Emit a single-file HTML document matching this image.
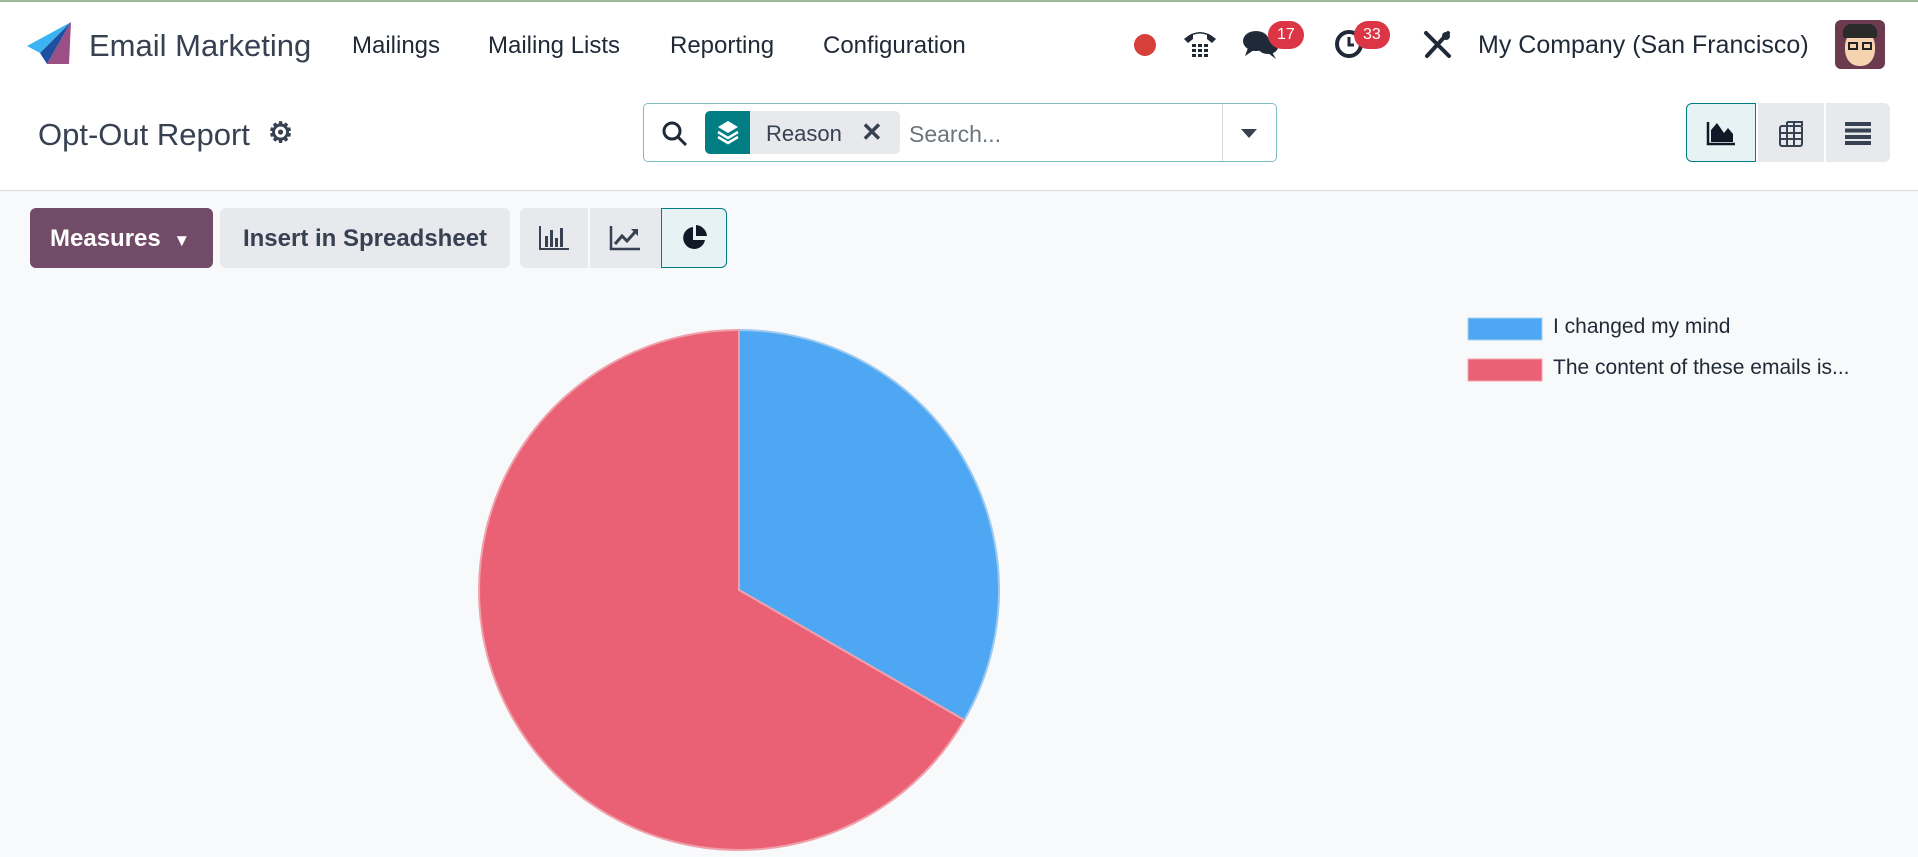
<!DOCTYPE html>
<html><head><meta charset="utf-8"><style>
*{margin:0;padding:0;box-sizing:border-box}
body{width:1918px;height:857px;overflow:hidden;background:#f8f9fa;font-family:"Liberation Sans",sans-serif;color:#212529;position:relative}
.a{position:absolute}
.top{left:0;top:0;width:1918px;height:191px;background:#fff;border-top:2px solid #9fb99c;border-bottom:1px solid #d8dadd}
.nav{font-size:24px;color:#1f2937;top:32px}
.badge{background:#dc3545;color:#fff;font-size:16px;border-radius:14px;height:28px;line-height:28px;padding:0 9px;top:21px}
.btn{background:#e7e9ed;border-radius:6px;top:208px;height:60px}
</style></head><body>
<div class="a top"></div>
<svg class="a" style="left:27px;top:22px" width="44" height="44" viewBox="0 0 44 44">
<polygon points="44,0 0,24 13,31" fill="#3ab4f2"/>
<polygon points="44,0 13,31 20,42" fill="#1e4fa0"/>
<polygon points="44,0 20,42 42,42" fill="#9c4f86"/>
</svg>
<div class="a" style="left:89px;top:28px;font-size:31px;color:#374151">Email Marketing</div>
<div class="a nav" style="left:352px">Mailings</div>
<div class="a nav" style="left:488px">Mailing Lists</div>
<div class="a nav" style="left:670px">Reporting</div>
<div class="a nav" style="left:823px">Configuration</div>
<div class="a" style="left:1134px;top:34px;width:22px;height:22px;border-radius:50%;background:#d63f3a"></div>
<svg class="a" style="left:1182px;top:27px" width="36" height="32" viewBox="0 0 36 32"><path d="M2 12 Q18 -2 34 12 L30 16 L25 12 L25 8 Q18 5 11 8 L11 12 L6 16Z" fill="#1f2937"/><g fill="#1f2937"><rect x="10" y="17" width="4" height="3"/><rect x="16" y="17" width="4" height="3"/><rect x="22" y="17" width="4" height="3"/><rect x="10" y="22" width="4" height="3"/><rect x="16" y="22" width="4" height="3"/><rect x="22" y="22" width="4" height="3"/><rect x="10" y="27" width="4" height="3"/><rect x="16" y="27" width="4" height="3"/><rect x="22" y="27" width="4" height="3"/></g></svg>
<svg class="a" style="left:1242px;top:28px" width="40" height="32" viewBox="0 0 40 32"><ellipse cx="14" cy="13" rx="13" ry="10" fill="#1f2937"/><path d="M6 20 L3 28 L12 22Z" fill="#1f2937"/><ellipse cx="26" cy="19" rx="10" ry="7" fill="#1f2937"/><path d="M30 24 L34 31 L26 25Z" fill="#1f2937"/></svg>
<div class="a badge" style="left:1268px">17</div>
<svg class="a" style="left:1333px;top:28px" width="32" height="32" viewBox="0 0 32 32"><circle cx="16" cy="16" r="12" fill="none" stroke="#1f2937" stroke-width="4"/><path d="M16 9 V17 H21" stroke="#1f2937" stroke-width="3" fill="none"/></svg>
<div class="a badge" style="left:1354px">33</div>
<svg class="a" style="left:1422px;top:30px" width="30" height="30" viewBox="0 0 30 30"><path d="M4 3 L27 26 M26 3 L5 26" stroke="#1f2937" stroke-width="4" stroke-linecap="round"/><circle cx="24" cy="6" r="4" fill="#1f2937"/></svg>
<div class="a nav" style="left:1478px;top:31px;font-size:25px">My Company (San Francisco)</div>
<div class="a" style="left:1835px;top:20px;width:50px;height:49px;border-radius:6px;background:#6b3a4e;overflow:hidden">
<div class="a" style="left:10px;top:10px;width:30px;height:36px;border-radius:45%;background:#f5d2b0"></div>
<div class="a" style="left:8px;top:4px;width:34px;height:14px;border-radius:8px 8px 2px 2px;background:#2a2a2a"></div>
<div class="a" style="left:13px;top:22px;width:10px;height:8px;border:2px solid #222"></div>
<div class="a" style="left:27px;top:22px;width:10px;height:8px;border:2px solid #222"></div>
</div>
<div class="a" style="left:38px;top:117px;font-size:31px;color:#374151">Opt-Out Report</div>
<div class="a" style="left:268px;top:116px;font-size:28px;color:#374151;font-weight:bold">⚙</div>
<div class="a" style="left:643px;top:103px;width:634px;height:59px;border:1px solid #7fbcbf;border-radius:5px;background:#fff"></div>
<svg class="a" style="left:661px;top:120px" width="28" height="28" viewBox="0 0 28 28"><circle cx="11" cy="11" r="8" fill="none" stroke="#1f2937" stroke-width="3"/><path d="M17 17 L25 25" stroke="#1f2937" stroke-width="3"/></svg>
<div class="a" style="left:705px;top:111px;width:195px;height:43px;background:#e7e9ed;border-radius:5px"></div>
<div class="a" style="left:705px;top:111px;width:45px;height:43px;background:#017e84;border-radius:5px 0 0 5px"></div>
<svg class="a" style="left:716px;top:119px" width="24" height="28" viewBox="0 0 24 28"><path d="M12 2 L22 8 L12 14 L2 8Z" fill="#fff"/><path d="M2 13 L12 19 L22 13 M2 18 L12 24 L22 18" stroke="#fff" stroke-width="2.5" fill="none"/></svg>
<div class="a" style="left:766px;top:121px;font-size:22px;color:#374151">Reason</div>
<div class="a" style="left:861px;top:117px;font-size:26px;color:#374151;font-weight:bold">✕</div>
<div class="a" style="left:909px;top:121px;font-size:23px;color:#6c757d">Search...</div>
<div class="a" style="left:1222px;top:104px;width:1px;height:57px;background:#d8dadd"></div>
<div class="a" style="left:1241px;top:129px;width:0;height:0;border-left:8px solid transparent;border-right:8px solid transparent;border-top:9px solid #374151"></div>
<div class="a" style="left:1686px;top:103px;width:70px;height:59px;background:#e6f2f3;border:1px solid #017e84;border-radius:6px 0 0 6px"></div>
<svg class="a" style="left:1706px;top:120px" width="30" height="26" viewBox="0 0 30 26"><path d="M2 2 V24 H29" stroke="#111827" stroke-width="2.5" fill="none"/><path d="M5 22 V10 L11 3 L18 13 L22 8 L27 14 V22Z" fill="#111827"/></svg>
<div class="a" style="left:1758px;top:103px;width:66px;height:59px;background:#e7e9ed"></div>
<svg class="a" style="left:1777px;top:120px" width="28" height="28" viewBox="0 0 28 28"><g stroke="#374151" stroke-width="2" fill="none"><rect x="3" y="6" width="22" height="20" rx="2"/><path d="M10 2 V26 M17 2 V26 M3 13 H25 M3 19 H25 M10 2 H25 V6"/></g></svg>
<div class="a" style="left:1826px;top:103px;width:64px;height:59px;background:#e7e9ed;border-radius:0 6px 6px 0"></div>
<svg class="a" style="left:1844px;top:121px" width="28" height="24" viewBox="0 0 28 24"><g fill="#374151"><rect x="1" y="1" width="26" height="4"/><rect x="1" y="7.5" width="26" height="4"/><rect x="1" y="14" width="26" height="4"/><rect x="1" y="20" width="26" height="4"/></g></svg>
<div class="a btn" style="left:30px;width:183px;background:#714b67;color:#fff;font-size:24px;font-weight:bold;line-height:62px;padding-left:20px">Measures <span style="font-size:17px;margin-left:6px">▼</span></div>
<div class="a btn" style="left:220px;width:290px;font-size:24px;font-weight:bold;color:#374151;line-height:62px;text-align:center">Insert in Spreadsheet</div>
<div class="a btn" style="left:520px;width:205px"></div>
<div class="a" style="left:588px;top:208px;width:2px;height:60px;background:#f8f9fa"></div>
<div class="a" style="left:661px;top:208px;width:66px;height:60px;background:#e6f2f3;border:1px solid #017e84;border-radius:0 6px 6px 0"></div>
<svg class="a" style="left:538px;top:224px" width="32" height="28" viewBox="0 0 32 28"><g fill="#374151"><rect x="1" y="2" width="2" height="24"/><rect x="1" y="24" width="30" height="2"/><rect x="7" y="12" width="3" height="11"/><rect x="12" y="6" width="3" height="17"/><rect x="17" y="14" width="3" height="9"/><rect x="22" y="4" width="3" height="19"/></g></svg>
<svg class="a" style="left:609px;top:224px" width="32" height="28" viewBox="0 0 32 28"><path d="M2 2 V25 H31" stroke="#374151" stroke-width="2.5" fill="none"/><path d="M6 20 L13 12 L18 17 L27 7" stroke="#374151" stroke-width="3" fill="none"/><path d="M22 5 H29 V12Z" fill="#374151"/></svg>
<svg class="a" style="left:680px;top:223px" width="30" height="30" viewBox="0 0 30 30"><path d="M13 4 A11 11 0 1 0 25 17 H13Z" fill="#111827"/><path d="M16 2 A12 12 0 0 1 27 13 H16Z" fill="#111827"/></svg>
<svg class="a" style="left:0;top:0" width="1918" height="857">
<path d="M739 590 L739 330 A260 260 0 0 1 964.2 720 Z" fill="#4ea7f2" stroke="#9cc9f0" stroke-width="2"/>
<path d="M739 590 L964.2 720 A260 260 0 1 1 739 330 Z" fill="#ea6175" stroke="#f0a0ab" stroke-width="2"/>
<rect x="1468" y="318" width="74" height="22" fill="#4ea7f2" stroke="#a6cff3"/>
<rect x="1468" y="359" width="74" height="22" fill="#ea6175" stroke="#f3a6b0"/>
</svg>
<div class="a" style="left:1553px;top:315px;font-size:21px;color:#1f2937">I changed my mind</div>
<div class="a" style="left:1553px;top:356px;font-size:21px;color:#1f2937">The content of these emails is...</div>
</body></html>
